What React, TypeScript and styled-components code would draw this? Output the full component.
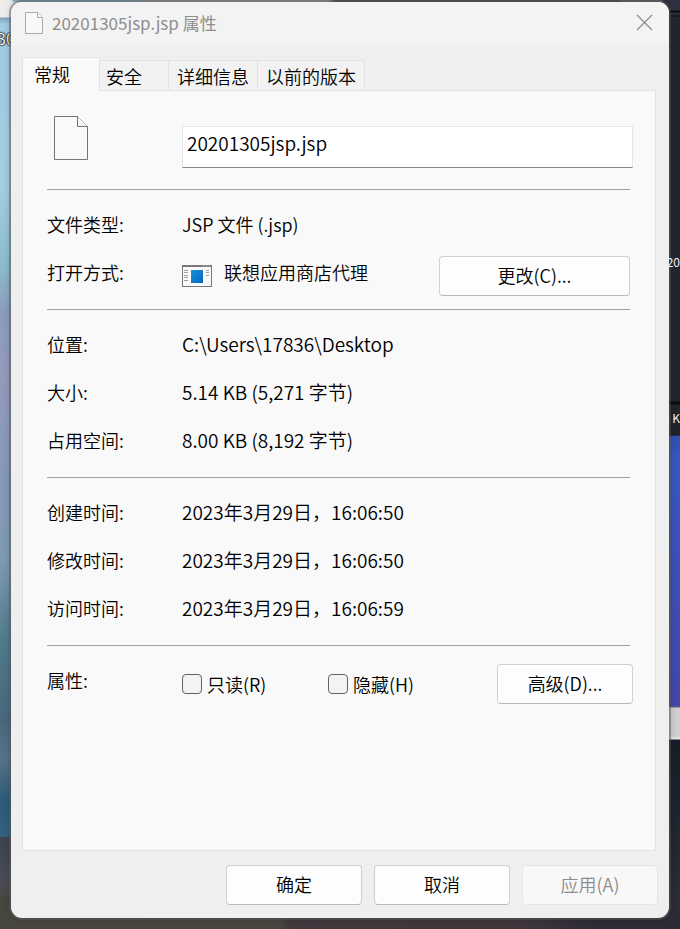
import React, { useState } from "react";
import styled, { createGlobalStyle } from "styled-components";

const font = '"Noto Sans CJK SC", "Noto Sans", sans-serif';

const GlobalStyle = createGlobalStyle`
  * { box-sizing: border-box; }
  body { margin: 0; font-family: ${font}; font-size: 18px; font-weight: 350; line-height: 24px; color: #000; }
  button, input { font: inherit; color: inherit; }
`;

const Desktop = styled.div`
  position: relative;
  display: flex;
  flex-direction: column;
  min-height: 100vh;
  padding: 2px 11px 11px;
  overflow: hidden;
  background:
    linear-gradient(to right, #48473f 0, #48463f 280px, #42383e 290px, #40373d 520px, #2d2c36 600px, #2b2c37 100%) left bottom / 100% 20px no-repeat,
    linear-gradient(to right, #ececec 0, #ececec 12px, #86b0c8 13px, #86b0c8 134px, #a8a8a8 142px, #a8a8a8 328px, #45464c 336px, #45464c 620px, #5b6064 621px, #5b6064 662px, #2f3140 663px) left top / 100% 2px no-repeat,
    linear-gradient(to bottom, #ececec 0, #efefef 17px, #7fa6bd 18px, #a3cbe1 24px, #a6cde2 190px, #8abccb 270px, #8d9dbd 310px, #949bbb 380px, #8799b8 480px, #7f9bb2 560px, #517b8b 640px, #4a687c 720px, #577389 760px, #2d5b77 800px, #33617b 836px, #3d4350 838px, #4a4c56 880px, #48473f 900px) left top / 50% 100% no-repeat,
    linear-gradient(to bottom, #2f3140 0, #2f3140 10px, #0c0d10 11px, #0c0d10 12px, #2b2d3a 13px, #2b2d3a 15px, #0c0d10 16px, #23262f 17px, #23262f 401px, #0a0b0d 402px, #0a0b0d 404px, #202328 405px, #202328 434px, #111 435px, #3150ae 436px, #3857c2 460px, #4348aa 706px, #6a6a70 707px, #cfcfd1 708px, #cfcfd1 736px, #ededed 739px, #161e29 740px, #1c2330 800px, #2b2c37 900px) right top / 50% 100% no-repeat;
`;

const BackdropText = styled.span<{ $side: "left" | "right"; $top: number }>`
  position: absolute;
  top: ${(p) => p.$top}px;
  ${(p) => (p.$side === "left" ? "left: -3px;" : "right: 0; z-index: 1;")}
  white-space: nowrap;
  color: #f2f2f2;
  font-size: ${(p) => (p.$side === "left" ? 16 : 12)}px;
  font-weight: 400;
  line-height: 18px;
  text-shadow: ${(p) => (p.$side === "left" ? "0 0 2px #000, 0 0 2px #000, 0 0 1px #000" : "none")};
`;

const Dialog = styled.main`
  position: relative;
  display: flex;
  flex: 1;
  flex-direction: column;
  border-radius: 11px;
  background: #efefef;
  box-shadow: 0 0 0 2px rgba(90, 90, 90, 0.5), 0 0 8px rgba(0, 0, 0, 0.25);
`;

const TitleBar = styled.header`
  display: flex;
  align-items: center;
  height: 43px;
  padding: 0 16px 2px 14px;
  gap: 9px;
  border-radius: 11px 11px 0 0;
  background: #f3f3f3;
`;

const Title = styled.h1`
  flex: 1;
  margin: 0;
  color: #8e8e8e;
  font-size: 17px;
  font-weight: 400;
  line-height: 24px;
`;

const CloseButton = styled.button`
  display: flex;
  padding: 0;
  border: 0;
  background: none;
`;

const TabList = styled.div`
  position: relative;
  display: flex;
  align-items: flex-end;
  margin: 12px 13px -1px 11px;
`;

const Tab = styled.button<{ $active: boolean }>`
  min-width: ${(p) => (p.$active ? 78 : 72)}px;
  height: ${(p) => (p.$active ? 34 : 31)}px;
  margin-right: ${(p) => (p.$active ? -3 : -1)}px;
  padding: ${(p) => (p.$active ? "0 11px" : "0 8px")};
  border: 1px solid #e3e3e3;
  border-bottom-color: ${(p) => (p.$active ? "#f9f9f9" : "#e3e3e3")};
  background: ${(p) => (p.$active ? "#f9f9f9" : "#f2f2f2")};
  z-index: ${(p) => (p.$active ? 1 : 0)};
  text-align: left;
  white-space: nowrap;
`;

const Panel = styled.section`
  flex: 1;
  margin: 0 13px 0 11px;
  padding: 0 25px 24px 24px;
  border: 1px solid #e3e3e3;
  background: #f9f9f9;
`;

const FileHeader = styled.div`
  display: grid;
  grid-template-columns: 135px 1fr;
  align-items: start;
  margin-right: -3px;
  padding: 25px 0 21px;
`;

const IconSlot = styled.div`
  display: flex;
  padding-left: 7px;
`;

const NameInput = styled.input`
  width: 100%;
  height: 42px;
  margin-top: 10px;
  padding: 0 4px 10px;
  border: 1px solid #e5e5e5;
  border-bottom-color: #868686;
  border-radius: 0;
  background: #fff;
  font-size: 19px;
  outline: none;
`;

const Group = styled.div`
  padding: 10px 0 13px;
  border-top: 1px solid #a0a0a0;
`;

const Row = styled.div<{ $wide?: boolean }>`
  display: grid;
  grid-template-columns: 135px 1fr;
  align-items: center;
  height: 48px;
  margin-right: ${(p) => (p.$wide ? -3 : 0)}px;
`;

const Value = styled.div`
  display: flex;
  align-items: center;
  min-width: 0;
  height: 48px;
`;

const ValueText = styled.span`
  font-size: 19px;
  white-space: nowrap;
`;

const Controls = styled.div<{ $end?: boolean }>`
  display: flex;
  align-items: center;
  margin-left: ${(p) => (p.$end ? "auto" : "0")};
  padding-top: 8px;
`;

const AppName = styled.span`
  margin-left: 12px;
  white-space: nowrap;
`;

const CheckLabel = styled.label`
  display: flex;
  align-items: center;
  width: 146px;
  gap: 5px;
`;

const CheckBox = styled.input`
  width: 20px;
  height: 20px;
  margin: 0;
  border: 1px solid #636363;
  border-radius: 4px;
  background: #f3f3f3;
  appearance: none;
  &:checked { background: #0067c0; }
`;

const PushButton = styled.button<{ $width?: number }>`
  width: ${(p) => p.$width ?? 136}px;
  height: 40px;
  padding: 0 0 2px;
  border: 1px solid #d0d0d0;
  border-bottom-color: #bababa;
  border-radius: 4px;
  background: #fdfdfd;
  &:disabled { color: #8c8c8c; background: #f8f8f8; border-color: #e6e6e6; }
`;

const Footer = styled.footer`
  display: flex;
  justify-content: flex-end;
  gap: 12px;
  padding: 14px 11px 13px;
`;

function FileIcon({ small = false }: { small?: boolean }) {
  return small ? (
    <svg width="18" height="22" viewBox="0 0 18 22" fill="#f8f8f8" stroke="#a9a9a9">
      <path d="M.5 .5H12.5L17.5 5.500V21.500H.5Z" />
      <path d="M12.500 .5V5.500H17.500" />
    </svg>
  ) : (
    <svg width="34" height="44" viewBox="0 0 34 44" fill="#f9f9f9" stroke="#77736f">
      <path d="M.5 .5H23.500L33.500 10.500V43.500H.5Z" />
      <path d="M23.500 .5V10.500H33.500" />
    </svg>
  );
}

function AppIcon() {
  return (
    <svg width="30" height="22" viewBox="0 0 30 22">
      <defs>
        <linearGradient id="tile" x1="0" y1="0" x2="1" y2="1">
          <stop offset="0" stopColor="#1a90de" />
          <stop offset="1" stopColor="#0568bd" />
        </linearGradient>
      </defs>
      <path d="M0 0H30V22H0Z" fill="#797774" />
      <path d="M1 2H29V21H1Z" fill="#fafafa" />
      <path d="M21 1h1m2 0h1m2 0h1" stroke="#d8d8d8" />
      <path d="M2 5.500h4m-4 2h4m-4 3h4m-4 2h4m-4 3h4M24 5.500h3m-3 2h3m-3 3h3" stroke="#a09e9b" />
      <path d="M9 5H21V18H9Z" fill="url(#tile)" />
    </svg>
  );
}

const tabs = ["常规", "安全", "详细信息", "以前的版本"];

const details = [
  [
    ["位置:", "C:\\Users\\17836\\Desktop"],
    ["大小:", "5.14 KB (5,271 字节)"],
    ["占用空间:", "8.00 KB (8,192 字节)"],
  ],
  [
    ["创建时间:", "2023年3月29日，16:06:50"],
    ["修改时间:", "2023年3月29日，16:06:50"],
    ["访问时间:", "2023年3月29日，16:06:59"],
  ],
];

export default function App() {
  const [name, setName] = useState("20201305jsp.jsp");

  return (
    <>
      <GlobalStyle />
      <Desktop>
        <BackdropText $side="left" $top={29} aria-hidden>30</BackdropText>
        <BackdropText $side="right" $top={253} aria-hidden>20</BackdropText>
        <BackdropText $side="right" $top={409} aria-hidden>l K</BackdropText>
        <Dialog>
          <TitleBar>
            <FileIcon small />
            <Title>20201305jsp.jsp 属性</Title>
            <CloseButton aria-label="关闭">
              <svg width="17" height="17" viewBox="0 0 17 17" stroke="#8e8e8e" strokeWidth="1.3">
                <path d="M1 1L16 16M16 1L1 16" />
              </svg>
            </CloseButton>
          </TitleBar>
          <TabList role="tablist">
            {tabs.map((tab, i) => (
              <Tab key={tab} role="tab" aria-selected={i === 0} $active={i === 0}>
                {tab}
              </Tab>
            ))}
          </TabList>
          <Panel role="tabpanel">
            <FileHeader>
              <IconSlot><FileIcon /></IconSlot>
              <NameInput aria-label="文件名" value={name} onChange={(e) => setName(e.target.value)} />
            </FileHeader>
            <Group>
              <Row>
                <span>文件类型:</span>
                <Value>JSP 文件 (.jsp)</Value>
              </Row>
              <Row>
                <span>打开方式:</span>
                <Value>
                  <Controls><AppIcon /></Controls>
                  <AppName>联想应用商店代理</AppName>
                  <Controls $end>
                    <PushButton $width={191}>更改(C)...</PushButton>
                  </Controls>
                </Value>
              </Row>
            </Group>
            {details.map((group) => (
              <Group key={group[0][0]}>
                {group.map(([label, value]) => (
                  <Row key={label}>
                    <span>{label}</span>
                    <Value><ValueText>{value}</ValueText></Value>
                  </Row>
                ))}
              </Group>
            ))}
            <Group>
              <Row $wide>
                <span>属性:</span>
                <Value>
                  <Controls>
                    <CheckLabel><CheckBox type="checkbox" />只读(R)</CheckLabel>
                    <CheckLabel><CheckBox type="checkbox" />隐藏(H)</CheckLabel>
                  </Controls>
                  <Controls $end>
                    <PushButton>高级(D)...</PushButton>
                  </Controls>
                </Value>
              </Row>
            </Group>
          </Panel>
          <Footer>
            <PushButton>确定</PushButton>
            <PushButton>取消</PushButton>
            <PushButton disabled>应用(A)</PushButton>
          </Footer>
        </Dialog>
      </Desktop>
    </>
  );
}
